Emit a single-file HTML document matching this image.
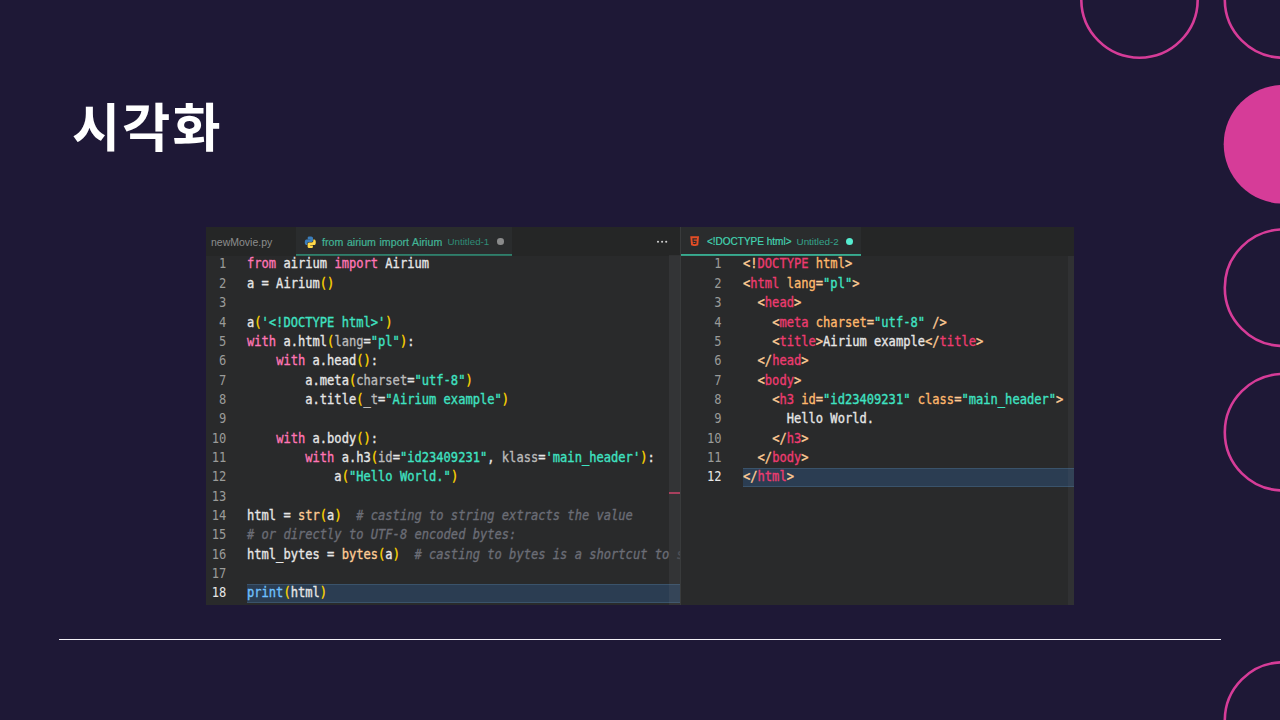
<!DOCTYPE html>
<html lang="ko">
<head>
<meta charset="utf-8">
<title>시각화</title>
<style>
html,body{margin:0;padding:0;}
body{width:1280px;height:720px;overflow:hidden;background:#1e1836;position:relative;font-family:"Liberation Sans","Noto Sans CJK KR",sans-serif;}
#deco{position:absolute;left:0;top:0;width:1280px;height:720px;}
h1{position:absolute;left:72px;top:94px;margin:0;font-family:"Liberation Sans","Noto Sans CJK KR",sans-serif;font-weight:700;font-size:52.2px;line-height:70px;color:#fff;letter-spacing:2.2px;}
#rule{position:absolute;left:59px;top:638.5px;width:1162px;height:1.3px;background:#f4f2f8;}
#ed{position:absolute;left:206px;top:227px;width:868px;height:378px;background:#292a2b;overflow:hidden;}
.pane{position:absolute;top:0;height:378px;overflow:hidden;}
#p1{left:0;width:475px;}
#p2{left:475px;width:393px;}
#p2 .tab.act{color:#43d4b2;-webkit-text-stroke:0.2px;}
#p2 .tab.act i{background:linear-gradient(#38ab90,#38ab90 50%,#33907a);}
#sep{position:absolute;left:474px;top:0;width:1px;height:378px;background:#393b3c;z-index:5;}
.tabs{position:absolute;left:0;top:0;right:0;height:29px;background:#252626;font-size:10.5px;line-height:30.4px;white-space:nowrap;z-index:2;}
.tab{position:absolute;top:0;height:29px;}
.tab.act{background:#2a2c2d;height:29px;color:#42b596;-webkit-text-stroke:0.2px;}
.tab.act i{position:absolute;left:0;right:0;top:27px;height:2px;background:linear-gradient(#2f7f6b,#2f7f6b 50%,#2c6557);}
.tab span{position:absolute;top:0;}
.code{position:absolute;left:0;top:27.6px;right:0;font-family:"DejaVu Sans Mono","Liberation Mono",monospace;font-size:12.1px;line-height:19.35px;color:#e6e6e6;}
.ln{position:relative;height:19.35px;}
.n{position:absolute;left:0;top:0.9px;text-align:right;color:#9a9b99;transform:scaleY(1.13);transform-origin:0 55%;}
#p1 .n{width:20.3px;}
#p2 .n{width:40.5px;}
.t{position:absolute;top:0.9px;white-space:pre;-webkit-text-stroke:0.3px;transform:scaleY(1.13);transform-origin:0 55%;}
#p1 .t{left:41px;}
#p2 .t{left:62px;}
.cur{background:#2b3d52;position:absolute;top:0.7px;height:19.35px;box-sizing:border-box;border-top:1px solid #3a536b;border-bottom:1px solid #3a536b;}
.k{color:#ff75b5}.s{color:#3fe2c2}.b{color:#ffd700}.f{color:#ffcc95}.c{color:#6b6d76;font-style:italic}.p{color:#bbbbbb}.fn{color:#6fc1ff}
.tg{color:#ee3b70}.at{color:#ffb86c}.br{color:#ffcc95}
</style>
</head>
<body>
<svg id="deco" viewBox="0 0 1280 720">
<g fill="none" stroke="#d63c98" stroke-width="2.6">
<circle cx="1139.5" cy="-0.5" r="58.2"/>
<circle cx="1283" cy="-0.5" r="58.2"/>
<circle cx="1283" cy="287.7" r="58.2"/>
<circle cx="1283" cy="432.2" r="58.2"/>
<circle cx="1283" cy="720.5" r="58.2"/>
</g>
<circle cx="1283" cy="144.3" r="59.3" fill="#d63c98"/>
</svg>
<h1>시각화</h1>
<div id="rule"></div>
<div id="ed">
 <div class="pane" id="p1">
  <div class="tabs">
   <div class="tab" style="left:0;width:90px;color:#8c8d8d"><span style="left:5px">newMovie.py</span></div>
   <div class="tab act" style="left:90px;width:216px;"><i></i>
    <svg style="position:absolute;left:7.6px;top:8.6px" width="12.6" height="12.6" viewBox="0 0 16 16"><path d="M7.9 0.5C4.5 0.5 4.7 2 4.7 2v2h3.4v.6H3.2S1 4.300 1 7.900s2 3.500 2 3.500h1.200V9.700s-.1-2 2-2h3.300s1.900 0 1.900-1.900V2.500S11.700.5 7.900.5z" fill="#3c7ebb"/><path d="M8.100 15.500c3.400 0 3.200-1.500 3.200-1.500v-2H7.900v-.6h4.900S15 11.700 15 8.100s-2-3.500-2-3.500h-1.200v1.700s.1 2-2 2H6.500S4.600 8.300 4.600 10.200v3.300s-.3 2 3.500 2z" fill="#ffd94a"/></svg>
    <span style="left:26px;font-size:10.6px;word-spacing:0.6px;letter-spacing:0.03px">from airium import Airium</span><span style="left:151.5px;color:#2f8d77;font-size:9.75px;-webkit-text-stroke:0">Untitled-1</span>
    <span style="left:201.3px;top:11.2px;width:6.6px;height:6.6px;border-radius:50%;background:#8a8b8b"></span>
   </div>
   <svg style="position:absolute;left:450px;top:13px" width="12" height="4" viewBox="0 0 12 4"><circle cx="2" cy="1.8" r="1.05" fill="#d0d0d0"/><circle cx="6.1" cy="1.8" r="1.05" fill="#d0d0d0"/><circle cx="10.2" cy="1.8" r="1.05" fill="#d0d0d0"/></svg>
  </div>
  <div class="code">
<div class="ln"><span class="n">1</span><span class="t"><span class="k">from</span> airium <span class="k">import</span> Airium</span></div>
<div class="ln"><span class="n">2</span><span class="t">a = Airium<span class="b">()</span></span></div>
<div class="ln"><span class="n">3</span></div>
<div class="ln"><span class="n">4</span><span class="t">a<span class="b">(</span><span class="s">'&lt;!DOCTYPE html&gt;'</span><span class="b">)</span></span></div>
<div class="ln"><span class="n">5</span><span class="t"><span class="k">with</span> a.html<span class="b">(</span><span class="p">lang</span>=<span class="s">"pl"</span><span class="b">)</span>:</span></div>
<div class="ln"><span class="n">6</span><span class="t">    <span class="k">with</span> a.head<span class="b">()</span>:</span></div>
<div class="ln"><span class="n">7</span><span class="t">        a.meta<span class="b">(</span><span class="p">charset</span>=<span class="s">"utf-8"</span><span class="b">)</span></span></div>
<div class="ln"><span class="n">8</span><span class="t">        a.title<span class="b">(</span><span class="p">_t</span>=<span class="s">"Airium example"</span><span class="b">)</span></span></div>
<div class="ln"><span class="n">9</span></div>
<div class="ln"><span class="n">10</span><span class="t">    <span class="k">with</span> a.body<span class="b">()</span>:</span></div>
<div class="ln"><span class="n">11</span><span class="t">        <span class="k">with</span> a.h3<span class="b">(</span><span class="p">id</span>=<span class="s">"id23409231"</span>, <span class="p">klass</span>=<span class="s">'main_header'</span><span class="b">)</span>:</span></div>
<div class="ln"><span class="n">12</span><span class="t">            a<span class="b">(</span><span class="s">"Hello World."</span><span class="b">)</span></span></div>
<div class="ln"><span class="n">13</span></div>
<div class="ln"><span class="n">14</span><span class="t">html = <span class="f">str</span><span class="b">(</span>a<span class="b">)</span>  <span class="c"># casting to string extracts the value</span></span></div>
<div class="ln"><span class="n">15</span><span class="t"><span class="c"># or directly to UTF-8 encoded bytes:</span></span></div>
<div class="ln"><span class="n">16</span><span class="t">html_bytes = <span class="f">bytes</span><span class="b">(</span>a<span class="b">)</span>  <span class="c"># casting to bytes is a shortcut to <span style="color:#484a50">str(a).encode('utf-8')</span></span></span></div>
<div class="ln"><span class="n">17</span></div>
<div class="ln"><span class="cur" style="left:41px;width:434px"></span><span class="n" style="color:#e6e6e6">18</span><span class="t"><span class="fn">print</span><span class="b">(</span>html<span class="b">)</span></span></div>
  </div>
  <div style="position:absolute;left:462.5px;top:27.6px;width:12.5px;height:351px;background:rgba(120,125,130,0.13);z-index:3"></div>
  <div style="position:absolute;left:463px;top:265px;width:12px;height:1.6px;background:#a8405e;z-index:4"></div>
 </div>
 <div id="sep"></div>
 <div class="pane" id="p2">
  <div class="tabs">
   <div class="tab act" style="left:0;width:180px;"><i></i>
    <svg style="position:absolute;left:9.2px;top:8.5px" width="9.3" height="10.7" viewBox="0 0 10 11"><path d="M0.300 0h9.400l-.85 9.600L5 10.800 1.150 9.600z" fill="#e44d26"/><path d="M2.500 2.200h5l-.15 1.400H3.900l.1 1.300h3.200l-.3 3.200L5 8.700l-1.900-.6-.1-1.400h1.300l.05.500.65.200.7-.2.100-1H2.900z" fill="#292a2b"/></svg>
    <span style="left:26px;font-size:10px">&lt;!DOCTYPE html&gt;</span><span style="left:115.5px;color:#35a38a;font-size:9.9px;-webkit-text-stroke:0">Untitled-2</span>
    <span style="left:165.2px;top:11.2px;width:7.2px;height:7.2px;border-radius:50%;background:#55ecd0"></span>
   </div>
  </div>
  <div class="code">
<div class="ln"><span class="n">1</span><span class="t"><span class="br">&lt;!</span><span class="tg">DOCTYPE</span> <span class="at">html</span><span class="br">&gt;</span></span></div>
<div class="ln"><span class="n">2</span><span class="t"><span class="br">&lt;</span><span class="tg">html</span> <span class="at">lang</span><span class="br">=</span><span class="s">"pl"</span><span class="br">&gt;</span></span></div>
<div class="ln"><span class="n">3</span><span class="t">  <span class="br">&lt;</span><span class="tg">head</span><span class="br">&gt;</span></span></div>
<div class="ln"><span class="n">4</span><span class="t">    <span class="br">&lt;</span><span class="tg">meta</span> <span class="at">charset</span><span class="br">=</span><span class="s">"utf-8"</span> <span class="br">/&gt;</span></span></div>
<div class="ln"><span class="n">5</span><span class="t">    <span class="br">&lt;</span><span class="tg">title</span><span class="br">&gt;</span>Airium example<span class="br">&lt;/</span><span class="tg">title</span><span class="br">&gt;</span></span></div>
<div class="ln"><span class="n">6</span><span class="t">  <span class="br">&lt;/</span><span class="tg">head</span><span class="br">&gt;</span></span></div>
<div class="ln"><span class="n">7</span><span class="t">  <span class="br">&lt;</span><span class="tg">body</span><span class="br">&gt;</span></span></div>
<div class="ln"><span class="n">8</span><span class="t">    <span class="br">&lt;</span><span class="tg">h3</span> <span class="at">id</span><span class="br">=</span><span class="s">"id23409231"</span> <span class="at">class</span><span class="br">=</span><span class="s">"main_header"</span><span class="br">&gt;</span></span></div>
<div class="ln"><span class="n">9</span><span class="t">      Hello World.</span></div>
<div class="ln"><span class="n">10</span><span class="t">    <span class="br">&lt;/</span><span class="tg">h3</span><span class="br">&gt;</span></span></div>
<div class="ln"><span class="n">11</span><span class="t">  <span class="br">&lt;/</span><span class="tg">body</span><span class="br">&gt;</span></span></div>
<div class="ln"><span class="cur" style="left:62px;width:331px"></span><span class="n" style="color:#e6e6e6">12</span><span class="t"><span class="br">&lt;/</span><span class="tg">html</span><span class="br">&gt;</span></span></div>
  </div>
  <div style="position:absolute;left:387px;top:29px;width:6px;height:349px;background:rgba(120,125,130,0.09);z-index:3"></div>
 </div>
</div>
</body>
</html>
